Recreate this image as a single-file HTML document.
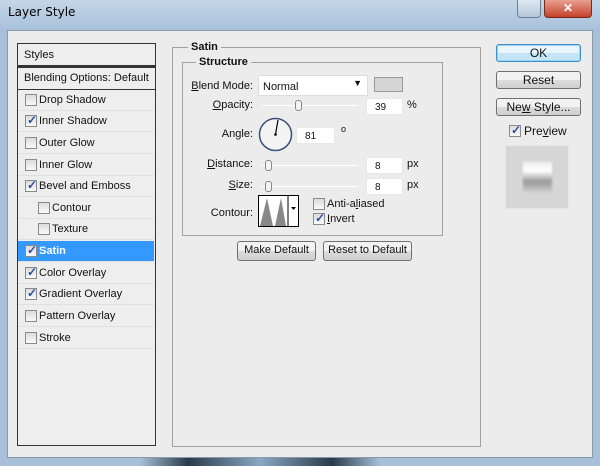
<!DOCTYPE html><html><head><style>
*{box-sizing:border-box;margin:0;padding:0}
body{width:600px;height:466px;overflow:hidden;background:#a7c0d8;font-family:"Liberation Sans",sans-serif;font-size:11px;color:#111;position:relative}
.a{position:absolute}
.cb{position:absolute;width:12px;height:12px;border:1px solid #8a8a8a;background:linear-gradient(#dcdcdc,#fafafa)}
.cb.c::after{content:"✓";position:absolute;left:1px;top:-3px;font-size:12px;color:#2c4fa8;font-weight:bold}
.row{position:absolute;left:18px;width:136px;height:21px;border-bottom:1px solid #e0e0e0}
.row span{position:absolute;top:4px}
.btn{position:absolute;border:1px solid #707070;border-radius:3px;background:linear-gradient(#f2f2f2 50%,#dcdcdc 50%,#cfcfcf);text-align:center;font-size:12px;line-height:17px}
.in{position:absolute;background:#fff;border:1px solid #e8e8e8;font-size:10px;padding:3px 0 0 8px;height:17px}
.lbl{position:absolute;text-align:right;font-size:11px}
.sl{position:absolute;height:1px;background:#aaa;border-bottom:1px solid #fff}
.th{position:absolute;width:7px;height:11px;border:1px solid #888;border-radius:3px;background:#f4f4f4}
</style></head><body>
<div class="a" style="left:0;top:0;width:600px;height:30px;background:linear-gradient(#c4d6e8,#a8c1da)"></div>
<div class="a" style="left:8px;top:5px;color:#000;font-family:'DejaVu Sans',sans-serif;font-size:12px">Layer Style</div>
<div class="a" style="left:517px;top:0;width:24px;height:18px;border:1px solid #6d7f95;border-top:0;border-radius:0 0 4px 4px;background:linear-gradient(#dfe8f1,#b5c7d9)"></div>
<div class="a" style="left:544px;top:0;width:48px;height:18px;border:1px solid #7a2a1c;border-top:0;border-radius:0 0 4px 4px;background:linear-gradient(#e8a090,#c4422c);color:#fff;text-align:center;font-weight:bold;font-size:12px;line-height:16px">✕</div>
<div class="a" style="left:7px;top:30px;width:586px;height:428px;background:#ececec;border:1px solid #8a9aaa"></div>
<div class="a" style="left:140px;top:458px;width:240px;height:8px;background:linear-gradient(90deg,#a7c0d8,#2a3a4a 20%,#8aa8c4 50%,#2a3a4a 80%,#a7c0d8)"></div>
<div class="a" style="left:17px;top:43px;width:139px;height:403px;border:1px solid #333;background:#eee"></div>
<div class="a" style="left:17px;top:43px;width:139px;height:24px;border:1px solid #333;border-bottom:2px solid #333"></div>
<div class="a" style="left:24px;top:49px">Styles</div>
<div class="a" style="left:17px;top:67px;width:139px;height:23px;border:1px solid #333"></div>
<div class="a" style="left:24px;top:72px">Blending Options: Default</div>
<div class="row" style="top:90px"><div class="cb" style="left:7px;top:4px"></div><span style="left:21px">Drop Shadow</span></div>
<div class="row" style="top:111px"><div class="cb c" style="left:7px;top:4px"></div><span style="left:21px">Inner Shadow</span></div>
<div class="row" style="top:133px"><div class="cb" style="left:7px;top:4px"></div><span style="left:21px">Outer Glow</span></div>
<div class="row" style="top:155px"><div class="cb" style="left:7px;top:4px"></div><span style="left:21px">Inner Glow</span></div>
<div class="row" style="top:176px"><div class="cb c" style="left:7px;top:4px"></div><span style="left:21px">Bevel and Emboss</span></div>
<div class="row" style="top:198px"><div class="cb" style="left:20px;top:4px"></div><span style="left:34px">Contour</span></div>
<div class="row" style="top:219px"><div class="cb" style="left:20px;top:4px"></div><span style="left:34px">Texture</span></div>
<div class="row" style="top:241px;background:#3399ff;color:#fff;font-weight:bold"><div class="cb c" style="left:7px;top:4px"></div><span style="left:21px">Satin</span></div>
<div class="row" style="top:263px"><div class="cb c" style="left:7px;top:4px"></div><span style="left:21px">Color Overlay</span></div>
<div class="row" style="top:284px"><div class="cb c" style="left:7px;top:4px"></div><span style="left:21px">Gradient Overlay</span></div>
<div class="row" style="top:306px"><div class="cb" style="left:7px;top:4px"></div><span style="left:21px">Pattern Overlay</span></div>
<div class="row" style="top:328px"><div class="cb" style="left:7px;top:4px"></div><span style="left:21px">Stroke</span></div>
<div class="a" style="left:172px;top:47px;width:309px;height:400px;border:1px solid #a0a0a0"></div>
<div class="a" style="left:188px;top:41px;background:#ececec;padding:0 3px;font-weight:bold">Satin</div>
<div class="a" style="left:182px;top:62px;width:261px;height:174px;border:1px solid #a0a0a0"></div>
<div class="a" style="left:196px;top:56px;background:#ececec;padding:0 3px;font-weight:bold">Structure</div>
<div class="lbl" style="left:190px;width:63px;top:80px"><u>B</u>lend Mode:</div>
<div class="a" style="left:258px;top:75px;width:110px;height:21px;background:#fff;border:1px solid #ddd;padding:5px 0 0 4px">Normal<span style="position:absolute;right:5px;top:2px;font-size:9px">▼</span></div>
<div class="a" style="left:374px;top:77px;width:29px;height:15px;background:#d4d4d4;border:1px solid #999"></div>
<div class="lbl" style="left:190px;width:63px;top:99px"><u>O</u>pacity:</div>
<div class="sl" style="left:262px;top:105px;width:96px"></div><div class="th" style="left:295px;top:100px"></div>
<div class="in" style="left:366px;top:98px;width:37px">39</div><div class="a" style="left:407px;top:99px">%</div>
<div class="lbl" style="left:190px;width:63px;top:128px">An<u>g</u>le:</div>
<svg class="a" style="left:258px;top:117px" width="35" height="35"><circle cx="17.5" cy="17.5" r="16" fill="#f4f4f4" stroke="#3a4f7a" stroke-width="1.5"/><line x1="17.5" y1="17.5" x2="20" y2="3" stroke="#000" stroke-width="1.2"/><circle cx="17.5" cy="17.5" r="1.3"/></svg>
<div class="in" style="left:296px;top:127px;width:39px">81</div><div class="a" style="left:341px;top:124px;font-size:9px">o</div>
<div class="lbl" style="left:190px;width:63px;top:158px"><u>D</u>istance:</div>
<div class="sl" style="left:262px;top:165px;width:96px"></div><div class="th" style="left:265px;top:160px"></div>
<div class="in" style="left:366px;top:157px;width:37px">8</div><div class="a" style="left:407px;top:158px">px</div>
<div class="lbl" style="left:190px;width:63px;top:179px"><u>S</u>ize:</div>
<div class="sl" style="left:262px;top:186px;width:96px"></div><div class="th" style="left:265px;top:181px"></div>
<div class="in" style="left:366px;top:178px;width:37px">8</div><div class="a" style="left:407px;top:179px">px</div>
<div class="lbl" style="left:190px;width:63px;top:207px">Contour:</div>
<svg class="a" style="left:258px;top:195px" width="41" height="32"><rect x="0.5" y="0.5" width="40" height="31" fill="#fff" stroke="#000"/><path d="M2 31 L9 3 L15 31 Z M17 31 L23 3 L28 31 Z" fill="#888"/><line x1="30" y1="1" x2="30" y2="31" stroke="#000"/><path d="M33 12 h5 l-2.5 3 z" fill="#000"/></svg>
<div class="cb" style="left:313px;top:198px"></div><div class="a" style="left:327px;top:198px">Anti-a<u>l</u>iased</div>
<div class="cb c" style="left:313px;top:213px"></div><div class="a" style="left:327px;top:213px"><u>I</u>nvert</div>
<div class="btn" style="left:237px;top:241px;width:79px;height:20px;font-size:11px">Make Default</div>
<div class="btn" style="left:323px;top:241px;width:89px;height:20px;font-size:11px">Reset to Default</div>
<div class="btn" style="left:496px;top:44px;width:85px;height:18px;border-color:#3c8fc8;box-shadow:0 0 0 1px #9ad4f4 inset;background:linear-gradient(#eaf6fd 50%,#c4e5f6 50%)">OK</div>
<div class="btn" style="left:496px;top:71px;width:85px;height:18px">Reset</div>
<div class="btn" style="left:496px;top:98px;width:85px;height:18px">Ne<u>w</u> Style...</div>
<div class="cb c" style="left:509px;top:125px"></div><div class="a" style="left:524px;top:124px;font-size:12px">Pre<u>v</u>iew</div>
<div class="a" style="left:505px;top:145px;width:64px;height:64px;background:#d6d6d6;border:1px solid #e6e6e6"></div>
<div class="a" style="left:523px;top:162px;width:29px;height:30px;background:linear-gradient(#eee,#fff 30%,#999 65%,#ccc);filter:blur(1px)"></div>
</body></html>
